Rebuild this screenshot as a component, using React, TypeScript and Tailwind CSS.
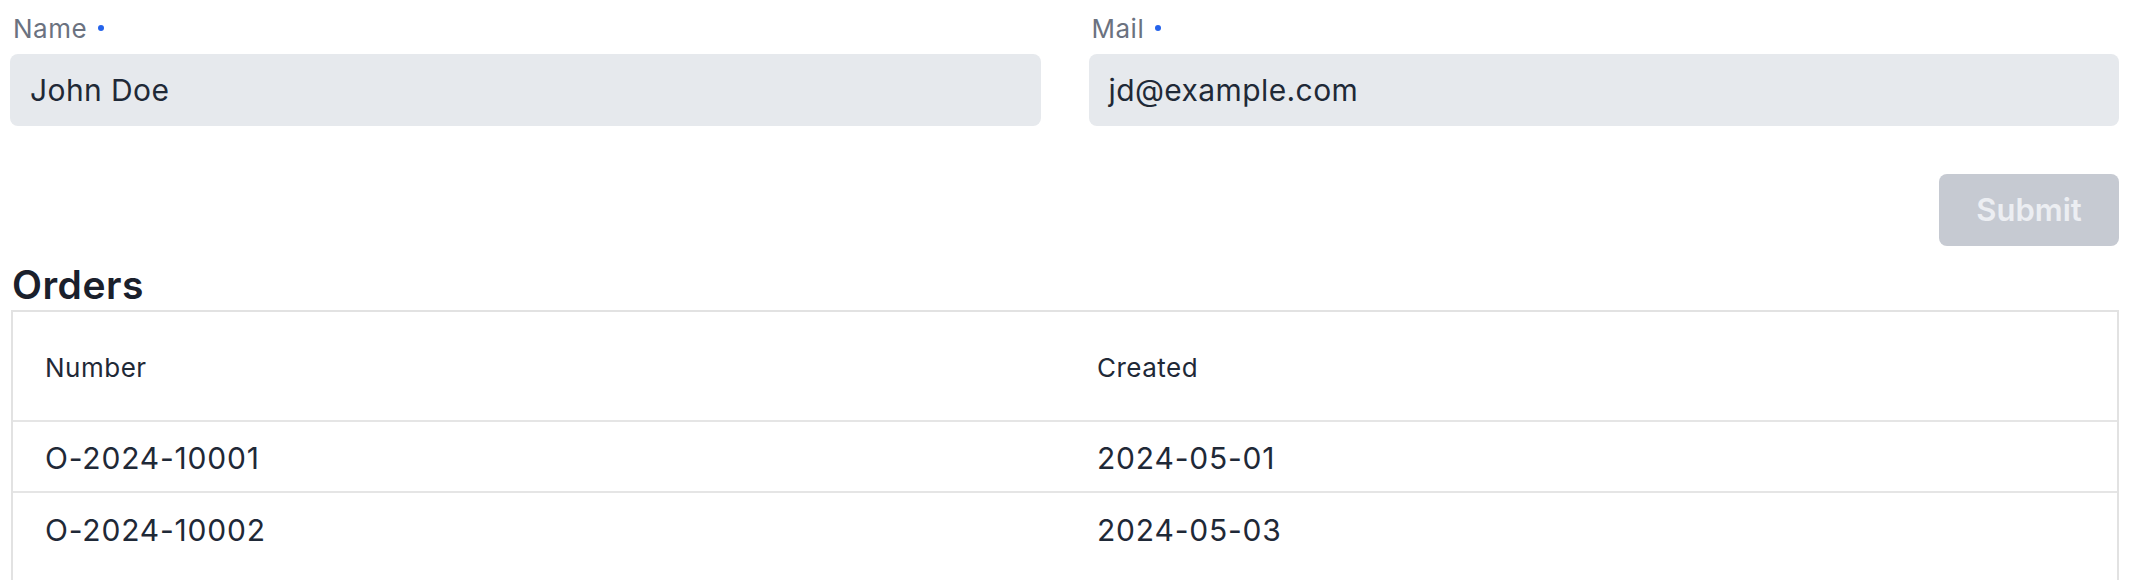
import React from "react";

const font = { fontFamily: "Inter, 'Noto Sans', sans-serif" };

function Field({ label, value }: { label: string; value: string }) {
  return (
    <div className="flex flex-col">
      <div className="flex items-center h-[36px] pl-[3px] mb-[8px] text-[26px] tracking-[0.5px] text-[#6b7280]">
        <span>{label}</span>
        <span className="ml-[11px] w-[6px] h-[6px] rounded-full bg-[#2563eb]" />
      </div>
      <div className="h-[72px] rounded-[8px] bg-[#e6e9ed] flex items-center px-[20px] text-[30px] tracking-[0.4px] text-[#1f2937]">
        {value}
      </div>
    </div>
  );
}

export default function App() {
  return (
    <div className="bg-white w-[2130px] h-[580px] overflow-hidden px-[11px] pt-[10px]" style={font}>
      <div className="grid grid-cols-2 gap-x-[48px] ml-[-1px]">
        <Field label="Name" value="John Doe" />
        <Field label="Mail" value="jd@example.com" />
      </div>
      <div className="flex justify-end mt-[48px]">
        <button className="w-[180px] h-[72px] rounded-[8px] bg-[#c6cad2] text-[#eceef2] text-[31px] font-semibold">
          Submit
        </button>
      </div>
      <h2 className="mt-[19px] h-[40px] leading-[40px] text-[39px] font-semibold tracking-[0.5px] text-[#1a202c] pl-[1px]">
        Orders
      </h2>
      <div className="mt-[5px] border-[2px] border-[#e2e2e2] border-b-0 h-[300px]">
        <div className="grid grid-cols-2 h-[110px] items-center border-b-[2px] border-[#e5e5e5] text-[26px] tracking-[0.5px] text-[#1f2937]">
          <div className="px-[32px] pt-[2px]">Number</div>
          <div className="px-[32px] pt-[2px]">Created</div>
        </div>
        <div className="grid grid-cols-2 h-[71px] items-center border-b-[2px] border-[#e5e5e5] text-[30px] tracking-[0.8px] text-[#1f2937]">
          <div className="px-[32px] pt-[3px]">O-2024-10001</div>
          <div className="px-[32px] pt-[3px]">2024-05-01</div>
        </div>
        <div className="grid grid-cols-2 h-[71px] items-center text-[30px] tracking-[0.8px] text-[#1f2937]">
          <div className="px-[32px] pt-[3px]">O-2024-10002</div>
          <div className="px-[32px] pt-[3px]">2024-05-03</div>
        </div>
      </div>
    </div>
  );
}
